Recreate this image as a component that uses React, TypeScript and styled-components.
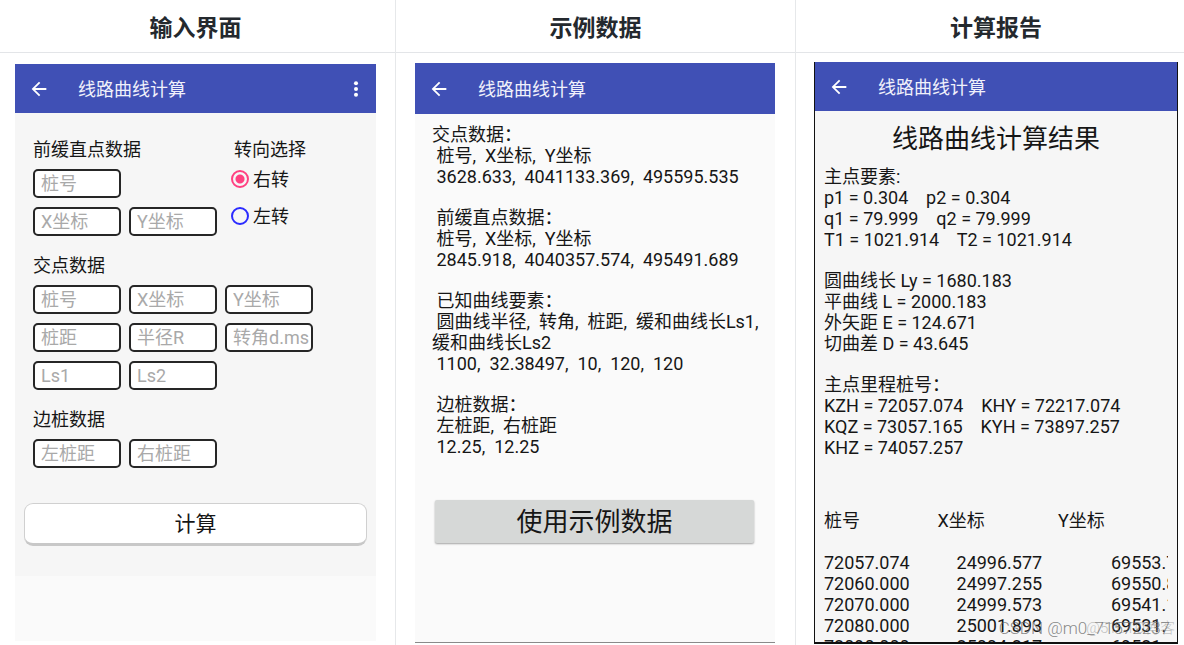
import React from "react";
import styled, { createGlobalStyle } from "styled-components";

const GlobalStyle = createGlobalStyle`
  *, *::before, *::after { box-sizing: border-box; }
  body {
    margin: 0;
    background: #fff;
    color: #161616;
    font-family: Roboto, "Noto Sans CJK SC", sans-serif;
    font-size: 18px;
    line-height: 21px;
  }
  button, input { font: inherit; color: inherit; }
`;

const Page = styled.main`
  display: grid;
  grid-template-columns: 396fr 400fr 388fr;
  height: 100vh;
  overflow: hidden;
`;

const Column = styled.section`
  display: flex;
  flex-direction: column;
  min-width: 0;
  min-height: 0;
  border-right: 1px solid #e6e8ea;
  &:last-child { border-right: 0; }
`;

const ColumnTitle = styled.h2<{ $pad?: string }>`
  flex: none;
  margin: 0;
  padding: ${(p) => p.$pad ?? "14px 0 8px"};
  border-bottom: 1px solid #e3e5e8;
  color: #24292e;
  font-size: 23px;
  font-weight: 700;
  line-height: 30px;
  text-align: center;
`;

const Cell = styled.div<{ $pad: string }>`
  display: flex;
  flex: 1;
  min-height: 0;
  padding: ${(p) => p.$pad};
`;

const Screen = styled.div<{ $edge?: "line" | "frame" }>`
  display: flex;
  flex: 1;
  flex-direction: column;
  min-width: 0;
  overflow: hidden;
  background: ${(p) => (p.$edge === "frame" ? "#f6f6f6" : "#fafafa")};
  border: ${(p) => (p.$edge === "frame" ? "solid #111" : "solid #8a8a8a")};
  border-width: ${(p) =>
    p.$edge === "frame" ? "0 1px 2px" : p.$edge === "line" ? "0 0 1px" : "0"};
`;

const Bar = styled.header<{ $height: number }>`
  display: flex;
  flex: none;
  align-items: center;
  height: ${(p) => p.$height}px;
  padding: 1px 9px 0 13px;
  background: #4050b5;
  color: #fff;
`;

const BarTitle = styled.h3`
  flex: 1;
  margin: 0 0 0 28px;
  color: #f0f1fb;
  font-size: 18px;
  font-weight: 400;
`;

const IconButton = styled.button`
  display: flex;
  padding: 0;
  border: 0;
  background: none;
  color: #fff;
  svg { width: 22px; height: 22px; fill: currentColor; }
`;

const Form = styled.form`
  display: flex;
  flex-direction: column;
  padding: 26px 9px 30px;
  background: #f6f6f6;
`;

const Groups = styled.div`
  display: flex;
  flex-direction: column;
  gap: 19px;
  padding: 0 9px;
`;

const TopRow = styled.div`
  display: flex;
  gap: 14px;
`;

const Group = styled.fieldset`
  min-width: 0;
  margin: 0;
  padding: 0;
  border: 0;
`;

const Legend = styled.legend<{ $indent?: boolean }>`
  padding: 0 0 9px ${(p) => (p.$indent ? 3 : 0)}px;
`;

const Fields = styled.div<{ $columns: number }>`
  display: grid;
  grid-template-columns: repeat(${(p) => p.$columns}, 88px);
  gap: 9px 8px;
`;

const Field = styled.input`
  min-width: 0;
  height: 29px;
  padding: 0 0 0 6px;
  border: 2px solid #262626;
  border-radius: 5px;
  background: #fff;
  outline: 0;
  &::placeholder { color: #a9a9a9; opacity: 1; }
`;

const Break = styled.span`
  grid-column: 2 / -1;
`;

const Choice = styled.label`
  display: flex;
  align-items: center;
  gap: 4px;
  height: 20px;
  & + & { margin-top: 17px; }
`;

const Radio = styled.input`
  appearance: none;
  width: 18px;
  height: 18px;
  margin: 0;
  border: 2px solid #2b2bff;
  border-radius: 50%;
  &:checked {
    border-color: #ff4081;
    background: radial-gradient(circle, #ff4081 4px, transparent 5px);
  }
`;

const Submit = styled.button`
  height: 43px;
  margin-top: 35px;
  padding: 0;
  border: 1px solid #d0d0d0;
  border-bottom: 3px solid #c8c8c8;
  border-radius: 9px;
  background: #fff;
  font-size: 21px;
  line-height: 30px;
`;

const Sample = styled.div`
  display: flex;
  flex-direction: column;
  gap: 20px;
  padding: 10px 0 43px 17px;
`;

const Lines = styled.p`
  margin: 0;
  white-space: pre;
`;

const SampleButton = styled.button`
  flex: none;
  height: 43px;
  margin: 0 21px 0 20px;
  padding: 0;
  border: 0;
  border-radius: 2px;
  background: #d6d8d7;
  box-shadow: 0 1px 2px rgba(0, 0, 0, 0.35);
  font-size: 26px;
  line-height: 30px;
`;

const Report = styled.div`
  display: flex;
  flex-direction: column;
  gap: 20px;
  padding: 13px 9px 0;
  min-height: 0;
`;

const ReportTitle = styled.h3`
  margin: 0 0 -8px;
  font-size: 26px;
  font-weight: 400;
  line-height: 30px;
  text-align: center;
`;

const TableClip = styled.div`
  min-height: 0;
  margin-top: 32px;
  overflow: hidden;
`;

const Table = styled.table`
  width: 100%;
  table-layout: fixed;
  border-collapse: collapse;
  white-space: nowrap;
  th, td { padding: 0; font-weight: 400; text-align: left; }
  th { padding-bottom: 21px; }
  th:nth-child(1) { width: 33%; }
  th:nth-child(2) { width: 35%; }
  td:nth-child(2) { padding-left: 19px; }
  td:nth-child(3) { padding-left: 53px; }
`;

const Watermark = styled.div<{ $right: number; $size: number; $tone: string }>`
  position: absolute;
  right: ${(p) => p.$right}px;
  bottom: 5px;
  color: ${(p) => p.$tone};
  font-size: ${(p) => p.$size}px;
  font-weight: 300;
  white-space: nowrap;
  pointer-events: none;
`;

const Marked = styled.div`
  position: relative;
  display: flex;
  flex: 1;
  min-width: 0;
  min-height: 0;
`;

const AppBar = ({ height, menu }: { height: number; menu?: boolean }) => (
  <Bar $height={height}>
    <IconButton type="button" aria-label="返回">
      <svg viewBox="0 0 24 24">
        <path d="M20 11H7.83l5.59-5.59L12 4l-8 8 8 8 1.41-1.41L7.83 13H20v-2z" />
      </svg>
    </IconButton>
    <BarTitle>线路曲线计算</BarTitle>
    {menu && (
      <IconButton type="button" aria-label="菜单">
        <svg viewBox="0 0 24 24">
          <circle cx="12" cy="5.8" r="2.2" />
          <circle cx="12" cy="12" r="2.2" />
          <circle cx="12" cy="18.2" r="2.2" />
        </svg>
      </IconButton>
    )}
  </Bar>
);

const Inputs = ({ names, columns }: { names: string[]; columns: number }) => (
  <Fields $columns={columns}>
    {names.map((name, i) =>
      name ? <Field key={i} placeholder={name} aria-label={name} /> : <Break key={i} />
    )}
  </Fields>
);

const sample = [
  "交点数据：\n 桩号,  X坐标,  Y坐标\n 3628.633,  4041133.369,  495595.535",
  " 前缓直点数据：\n 桩号,  X坐标,  Y坐标\n 2845.918,  4040357.574,  495491.689",
  " 已知曲线要素：\n 圆曲线半径,  转角,  桩距,  缓和曲线长Ls1,\n缓和曲线长Ls2\n 1100,  32.38497,  10,  120,  120",
  " 边桩数据：\n 左桩距,  右桩距\n 12.25,  12.25",
];

const report = [
  "主点要素:\np1 = 0.304    p2 = 0.304\nq1 = 79.999    q2 = 79.999\nT1 = 1021.914    T2 = 1021.914",
  "圆曲线长 Ly = 1680.183\n平曲线 L = 2000.183\n外矢距 E = 124.671\n切曲差 D = 43.645",
  "主点里程桩号：\nKZH = 72057.074    KHY = 72217.074\nKQZ = 73057.165    KYH = 73897.257\nKHZ = 74057.257",
];

const rows = [
  ["72057.074", "24996.577", "69553.7"],
  ["72060.000", "24997.255", "69550.8"],
  ["72070.000", "24999.573", "69541.1"],
  ["72080.000", "25001.893", "69531."],
  ["72090.000", "25004.217", "69521."],
];

export default function App() {
  return (
    <>
      <GlobalStyle />
      <Page>
        <Column>
          <ColumnTitle $pad="14px 4px 8px 0">输入界面</ColumnTitle>
          <Cell $pad="11px 19px 4px 15px">
            <Screen>
              <AppBar height={49} menu />
              <Form onSubmit={(e) => e.preventDefault()}>
                <Groups>
                  <TopRow>
                    <Group>
                      <Legend>前缓直点数据</Legend>
                      <Inputs columns={2} names={["桩号", "", "X坐标", "Y坐标"]} />
                    </Group>
                    <Group>
                      <Legend $indent>转向选择</Legend>
                      <Choice>
                        <Radio type="radio" name="turn" defaultChecked />
                        右转
                      </Choice>
                      <Choice>
                        <Radio type="radio" name="turn" />
                        左转
                      </Choice>
                    </Group>
                  </TopRow>
                  <Group>
                    <Legend>交点数据</Legend>
                    <Inputs
                      columns={3}
                      names={["桩号", "X坐标", "Y坐标", "桩距", "半径R", "转角d.ms", "Ls1", "Ls2"]}
                    />
                  </Group>
                  <Group>
                    <Legend>边桩数据</Legend>
                    <Inputs columns={2} names={["左桩距", "右桩距"]} />
                  </Group>
                </Groups>
                <Submit type="submit">计算</Submit>
              </Form>
            </Screen>
          </Cell>
        </Column>

        <Column>
          <ColumnTitle>示例数据</ColumnTitle>
          <Cell $pad="10px 20px 2px 19px">
            <Screen $edge="line">
              <AppBar height={51} />
              <Sample>
                {sample.map((text) => (
                  <Lines key={text}>{text}</Lines>
                ))}
              </Sample>
              <SampleButton type="button">使用示例数据</SampleButton>
            </Screen>
          </Cell>
        </Column>

        <Column>
          <ColumnTitle $pad="14px 0 8px 12px">计算报告</ColumnTitle>
          <Cell $pad="9px 6px 1px 18px">
            <Marked>
              <Screen $edge="frame">
                <AppBar height={49} />
                <Report>
                  <ReportTitle>线路曲线计算结果</ReportTitle>
                  {report.map((text) => (
                    <Lines key={text}>{text}</Lines>
                  ))}
                  <TableClip>
                    <Table>
                      <thead>
                        <tr>
                          <th>桩号</th>
                          <th>X坐标</th>
                          <th>Y坐标</th>
                        </tr>
                      </thead>
                      <tbody>
                        {rows.map((row) => (
                          <tr key={row[0]}>
                            {row.map((value) => (
                              <td key={value}>{value}</td>
                            ))}
                          </tr>
                        ))}
                      </tbody>
                    </Table>
                  </TableClip>
                </Report>
              </Screen>
              <Watermark $right={3} $size={15} $tone="rgba(140, 140, 140, 0.5)">
                @51CTO博客
              </Watermark>
              <Watermark $right={8} $size={17} $tone="rgba(100, 100, 100, 0.75)">
                CSDN @m0_71572237
              </Watermark>
            </Marked>
          </Cell>
        </Column>
      </Page>
    </>
  );
}
